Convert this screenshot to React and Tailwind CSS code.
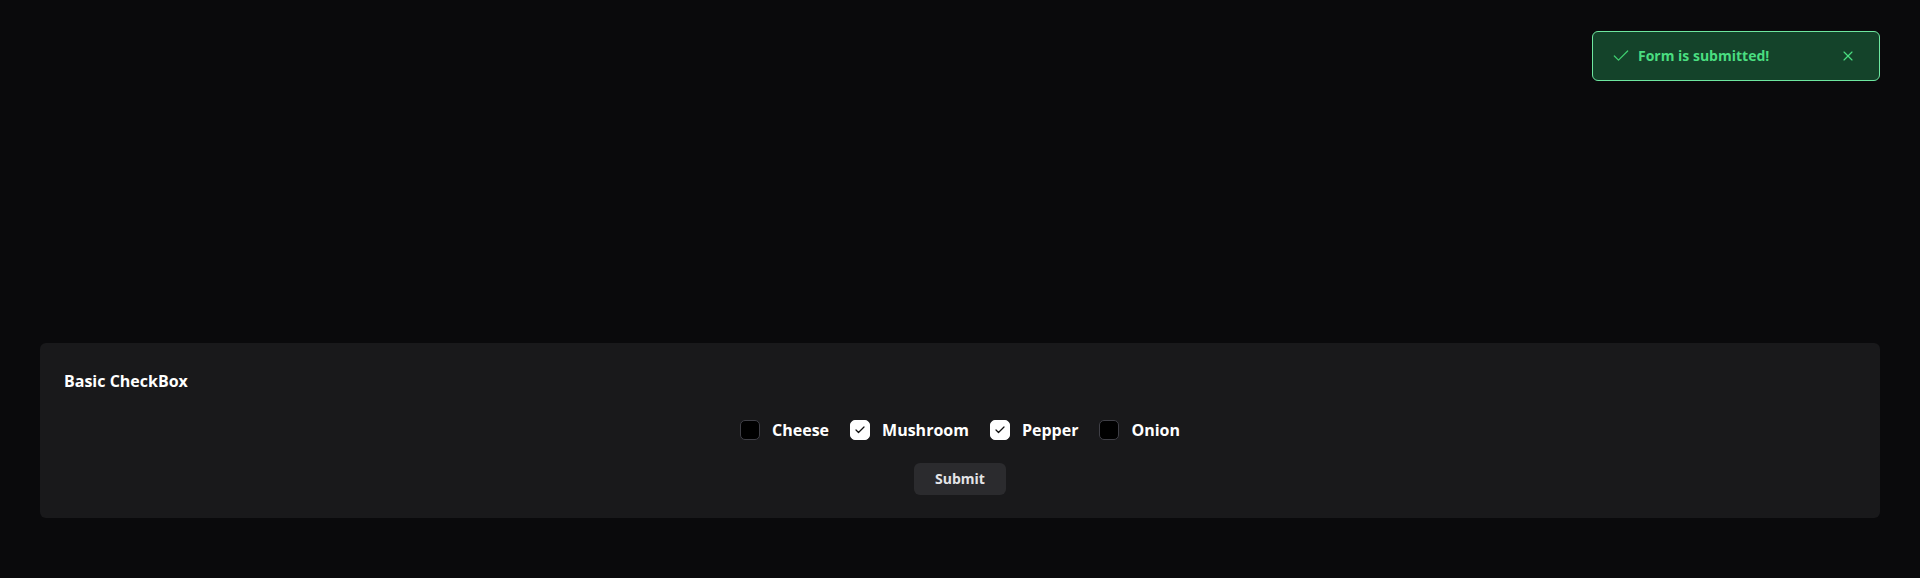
import { useState } from 'react';
import { Check, X } from 'lucide-react';

const options = ['Cheese', 'Mushroom', 'Pepper', 'Onion'];

const App = () => {
  const [checked, setChecked] = useState({ Mushroom: true, Pepper: true });

  const toggle = (name) => setChecked((c) => ({ ...c, [name]: !c[name] }));

  return (
    <div className="relative min-h-[578px] bg-[#0a0a0c] px-10 pt-[343px] pb-[60px] font-['Open_Sans',sans-serif]">
      {/* Toast */}
      <div className="absolute top-[31px] right-[40px] w-[288px] h-[50px] flex items-center rounded-md border border-[#6ee7a0] bg-[#14432a] pl-[18px] pr-[23px]">
        <Check className="w-5 h-5 text-[#3fcf70]" strokeWidth={1.5} />
        <span className="ml-[7px] text-sm font-bold text-[#4ade80]">Form is submitted!</span>
        <X className="ml-auto w-4 h-4 text-[#4ade80]" strokeWidth={1.75} />
      </div>

      {/* Card */}
      <div className="rounded-md bg-[#19191b] px-6 pt-[26px] pb-[23px]">
        <h2 className="text-base leading-6 font-bold text-white">Basic CheckBox</h2>

        <div className="mt-[25px] flex items-center justify-center gap-[21px]">
          {options.map((name) => (
            <label key={name} className="flex items-center gap-3 cursor-pointer select-none">
              <button
                type="button"
                onClick={() => toggle(name)}
                className={`w-5 h-5 rounded-[5px] border flex items-center justify-center ${
                  checked[name] ? 'bg-white border-white' : 'bg-black border-[#3f3f46]'
                }`}
              >
                {checked[name] && <Check className="w-3 h-3 text-[#111]" strokeWidth={2.5} />}
              </button>
              <span className="text-base leading-6 font-bold text-white">{name}</span>
            </label>
          ))}
        </div>

        <div className="mt-[21px] flex justify-center">
          <button className="h-8 w-[92px] rounded-md bg-[#2b2b2e] text-sm font-bold text-[#e4e4e7]">
            Submit
          </button>
        </div>
      </div>
    </div>
  );
};

export default App;
